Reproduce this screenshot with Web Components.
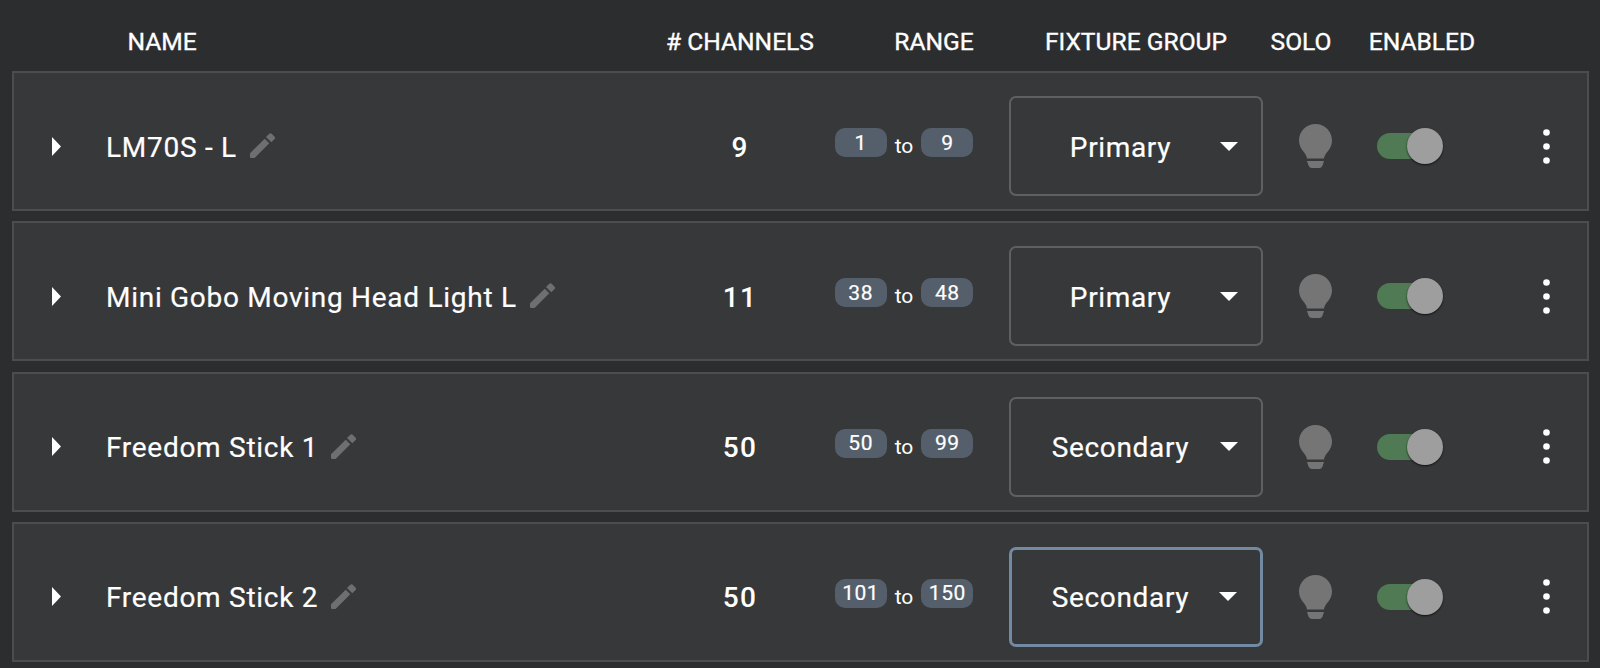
<!DOCTYPE html>
<html>
<head>
<meta charset="utf-8">
<title>Fixtures</title>
<style>
	html, body { margin: 0; padding: 0; background: #2c2d2f; }
	body { width: 1600px; height: 668px; overflow: hidden; font-family: Roboto, sans-serif; color: #fff; }
	fixture-list { padding: 0 11px 0 12px; }
</style>
</head>
<body>
<fixture-list>
	<fixture-header></fixture-header>
	<fixture-row channels="9" from="1" to="9" group="Primary">LM70S - L</fixture-row>
	<fixture-row channels="11" from="38" to="48" group="Primary">Mini Gobo Moving Head Light L</fixture-row>
	<fixture-row channels="50" from="50" to="99" group="Secondary">Freedom Stick 1</fixture-row>
	<fixture-row channels="50" from="101" to="150" group="Secondary" focused>Freedom Stick 2</fixture-row>
</fixture-list>

<script>
// list wrapper
class FixtureList extends HTMLElement {
	constructor() {
		super();
		this.attachShadow({ mode: 'open' }).innerHTML = `
			<style>
				:host { display: flex; flex-direction: column; gap: 10.3px; }
			</style>
			<slot></slot>
		`;
	}
}

// column titles
class FixtureHeader extends HTMLElement {
	constructor() {
		super();
		this.attachShadow({ mode: 'open' }).innerHTML = `
			<style>
				:host {
					display: grid;
					grid-template-columns: 115.5px 512.5px 200px 188px 216px 114px 128px;
					align-items: center;
					height: 71px;
					margin-bottom: -10.3px;
					padding-top: 11px;
					box-sizing: border-box;
					font: 400 24.6px Roboto, sans-serif;
					-webkit-text-stroke: 0.35px #fff;
					color: #fff;
					white-space: nowrap;
				}
				span { text-align: center; }
				.name { text-align: left; }
			</style>
			<i></i>
			<span class="name">NAME</span>
			<span># CHANNELS</span>
			<span>RANGE</span>
			<span>FIXTURE GROUP</span>
			<span>SOLO</span>
			<span>ENABLED</span>
		`;
	}
}

// small number pill in the range column
class RangePill extends HTMLElement {
	constructor() {
		super();
		this.attachShadow({ mode: 'open' }).innerHTML = `
			<style>
				:host {
					display: flex;
					align-items: center;
					justify-content: center;
					width: 52px;
					height: 29px;
					border-radius: 10px;
					background: #545f6b;
					font: 400 21px Roboto, sans-serif;
					-webkit-text-stroke: 0.2px #fff;
					letter-spacing: 0.5px;
					color: #fff;
				}
			</style>
			<slot></slot>
		`;
	}
}

// outlined dropdown
class GroupSelect extends HTMLElement {
	constructor() {
		super();
		this.attachShadow({ mode: 'open' }).innerHTML = `
			<style>
				:host {
					display: flex;
					align-items: center;
					box-sizing: border-box;
					width: 254px;
					height: 100px;
					border: 2px solid #5f6062;
					border-radius: 7px;
					font: 400 28px Roboto, sans-serif;
					-webkit-text-stroke: 0.2px #fff;
					letter-spacing: 0.65px;
					color: #fff;
				}
				:host([focused]) {
					border: 3px solid #738aa3;
				}
				.value { flex: 1; text-align: center; padding: 2px 0 0 10px; }
				.arrow {
					width: 0;
					height: 0;
					margin-right: 23px;
					border-left: 9px solid transparent;
					border-right: 9px solid transparent;
					border-top: 9px solid #fff;
				}
			</style>
			<span class="value"><slot></slot></span>
			<span class="arrow"></span>
		`;
	}
}

// on/off switch
class EnableToggle extends HTMLElement {
	constructor() {
		super();
		this.attachShadow({ mode: 'open' }).innerHTML = `
			<style>
				:host {
					display: flex;
					align-items: center;
					position: relative;
					width: 66px;
					height: 36px;
				}
				.track { width: 58px; height: 26px; border-radius: 13px; background: #4f7a54; }
				.thumb {
					position: absolute;
					right: 0;
					top: 0;
					width: 36px;
					height: 36px;
					border-radius: 50%;
					background: #9e9e9e;
					box-shadow: 0 1px 2px rgba(0, 0, 0, 0.7);
				}
			</style>
			<div class="track"></div>
			<div class="thumb"></div>
		`;
	}
}

// one fixture
class FixtureRow extends HTMLElement {
	constructor() {
		super();
		this.shadow = this.attachShadow({ mode: 'open' });
	}

	connectedCallback() {
		const channels = this.getAttribute('channels');
		const from = this.getAttribute('from');
		const to = this.getAttribute('to');
		const group = this.getAttribute('group');
		const focused = this.hasAttribute('focused') ? 'focused' : '';

		this.shadow.innerHTML = `
			<style>
				:host {
					display: grid;
					grid-template-columns: 92px 554px 160px 170px 292px 67px 122px 1fr;
					align-items: center;
					box-sizing: border-box;
					height: 140px;
					padding: 23px 0 13px;
					background: #37383a;
					border: 2px solid #4c4d4f;
					color: #fff;
				}
				.caret { display: block; margin-left: 38px; }
				.name {
					display: flex;
					align-items: center;
					gap: 13px;
					font: 400 28px Roboto, sans-serif;
					-webkit-text-stroke: 0.2px #fff;
					letter-spacing: 0.72px;
					white-space: nowrap;
				}
				.name span { padding-top: 2px; }
				.name svg { display: block; }
				.channels {
					text-align: center;
					padding-top: 2px;
					font: 500 28px Roboto, sans-serif;
					letter-spacing: 1.3px;
				}
				.range {
					display: flex;
					justify-content: center;
					align-items: center;
					gap: 8px;
					margin: -7px 0 0 -2px;
				}
				.range .to {
					font: 400 21px Roboto, sans-serif;
					padding-top: 7px;
				}
				group-select { justify-self: center; }
				.solo, enable-toggle { justify-self: center; }
				.solo { display: block; }
				.more { display: block; margin-left: 72px; }
			</style>
			<svg class="caret" width="9" height="19" viewBox="0 0 9 19"><path d="M0 0 L9 9.5 L0 19Z" fill="#fff"/></svg>
			<div class="name">
				<span><slot></slot></span>
				<svg width="26" height="26" viewBox="0 0 26 26" fill="#6f6f6f">
					<path d="M0 20.3L14.7 5.7L19.3 10.3L4.6 25H1Q0 25 0 24Z"/>
					<path d="M16 4L19.3 .8Q20.5 -.3 21.7 .8L24.6 3.7Q25.7 4.9 24.6 6.1L21.3 9.3Z"/>
				</svg>
			</div>
			<div class="channels">${channels}</div>
			<div class="range">
				<range-pill>${from}</range-pill>
				<span class="to">to</span>
				<range-pill>${to}</range-pill>
			</div>
			<group-select ${focused}>${group}</group-select>
			<svg class="solo" width="33" height="44" viewBox="0 0 33 44" fill="#757575">
				<path d="M16.5 0C7.4 0 0 7.4 0 16.5C0 21 2 24.5 4 27C6 29.5 7.5 31 8 34.5H25C25.5 31 27 29.5 29 27C31 24.5 33 21 33 16.5C33 7.4 25.6 0 16.5 0Z"/>
				<path d="M8 37H25L23.5 41.5Q22.5 44 20 44H13Q10.5 44 9.5 41.5Z"/>
			</svg>
			<enable-toggle></enable-toggle>
			<svg class="more" width="7" height="35" viewBox="0 0 7 35" fill="#fff">
				<circle cx="3.5" cy="3.5" r="3.3"/><circle cx="3.5" cy="17.5" r="3.3"/><circle cx="3.5" cy="31.5" r="3.3"/>
			</svg>
		`;
	}
}

customElements.define('fixture-list', FixtureList);
customElements.define('fixture-header', FixtureHeader);
customElements.define('range-pill', RangePill);
customElements.define('group-select', GroupSelect);
customElements.define('enable-toggle', EnableToggle);
customElements.define('fixture-row', FixtureRow);
</script>
</body>
</html>
